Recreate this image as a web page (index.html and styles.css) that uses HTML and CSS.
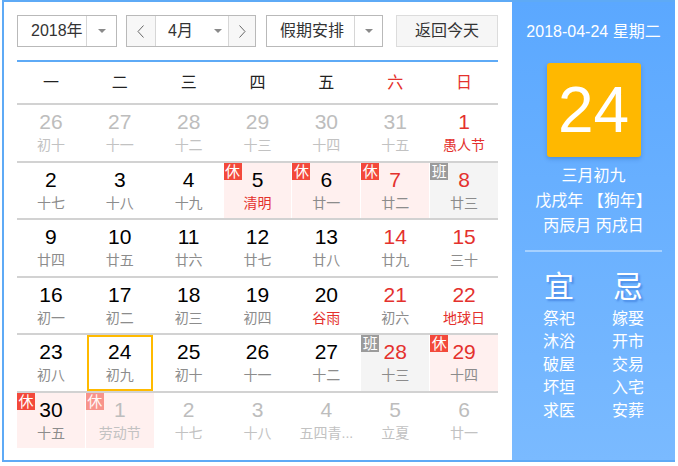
FILE: index.html
```html
<!DOCTYPE html>
<html lang="zh">
<head>
<meta charset="utf-8">
<title>万年历</title>
<link rel="stylesheet" href="styles.css">
</head>
<body>
<div class="widget">
  <div class="main">
    <div class="toolbar">
      <div class="sel year"><span class="sel-text">2018年</span><span class="sel-arrow"><i class="caret"></i></span></div>
      <div class="sel month-group">
        <span class="nav"><svg width="8" height="13" viewBox="0 0 8 13"><polyline points="6.5,0.5 1,6.5 6.5,12.5" fill="none" stroke="#666" stroke-width="1"/></svg></span>
        <span class="month"><span class="m-text">4月</span><i class="caret"></i></span>
        <span class="nav next"><svg width="8" height="13" viewBox="0 0 8 13"><polyline points="1.5,0.5 7,6.5 1.5,12.5" fill="none" stroke="#666" stroke-width="1"/></svg></span>
      </div>
      <div class="sel holiday"><span class="sel-text">假期安排</span><span class="sel-arrow"><i class="caret"></i></span></div>
      <div class="btn-today">返回今天</div>
    </div>

    <div class="weekdays">
      <span>一</span><span>二</span><span>三</span><span>四</span><span>五</span><span class="red">六</span><span class="red">日</span>
    </div>

    <div class="row">
      <div class="cell other"><span class="num">26</span><span class="lunar">初十</span></div>
      <div class="cell other"><span class="num">27</span><span class="lunar">十一</span></div>
      <div class="cell other"><span class="num">28</span><span class="lunar">十二</span></div>
      <div class="cell other"><span class="num">29</span><span class="lunar">十三</span></div>
      <div class="cell other"><span class="num">30</span><span class="lunar">十四</span></div>
      <div class="cell other"><span class="num">31</span><span class="lunar">十五</span></div>
      <div class="cell red"><span class="num">1</span><span class="lunar fest">愚人节</span></div>
    </div>

    <div class="row">
      <div class="cell"><span class="num">2</span><span class="lunar">十七</span></div>
      <div class="cell"><span class="num">3</span><span class="lunar">十八</span></div>
      <div class="cell"><span class="num">4</span><span class="lunar">十九</span></div>
      <div class="cell rest"><span class="badge">休</span><span class="num">5</span><span class="lunar fest">清明</span></div>
      <div class="cell rest"><span class="badge">休</span><span class="num">6</span><span class="lunar">廿一</span></div>
      <div class="cell rest red"><span class="badge">休</span><span class="num">7</span><span class="lunar">廿二</span></div>
      <div class="cell work red"><span class="badge work-b">班</span><span class="num">8</span><span class="lunar">廿三</span></div>
    </div>

    <div class="row">
      <div class="cell"><span class="num">9</span><span class="lunar">廿四</span></div>
      <div class="cell"><span class="num">10</span><span class="lunar">廿五</span></div>
      <div class="cell"><span class="num">11</span><span class="lunar">廿六</span></div>
      <div class="cell"><span class="num">12</span><span class="lunar">廿七</span></div>
      <div class="cell"><span class="num">13</span><span class="lunar">廿八</span></div>
      <div class="cell red"><span class="num">14</span><span class="lunar">廿九</span></div>
      <div class="cell red"><span class="num">15</span><span class="lunar">三十</span></div>
    </div>

    <div class="row">
      <div class="cell"><span class="num">16</span><span class="lunar">初一</span></div>
      <div class="cell"><span class="num">17</span><span class="lunar">初二</span></div>
      <div class="cell"><span class="num">18</span><span class="lunar">初三</span></div>
      <div class="cell"><span class="num">19</span><span class="lunar">初四</span></div>
      <div class="cell"><span class="num">20</span><span class="lunar fest">谷雨</span></div>
      <div class="cell red"><span class="num">21</span><span class="lunar">初六</span></div>
      <div class="cell red"><span class="num">22</span><span class="lunar fest">地球日</span></div>
    </div>

    <div class="row">
      <div class="cell"><span class="num">23</span><span class="lunar">初八</span></div>
      <div class="cell today"><span class="num">24</span><span class="lunar">初九</span></div>
      <div class="cell"><span class="num">25</span><span class="lunar">初十</span></div>
      <div class="cell"><span class="num">26</span><span class="lunar">十一</span></div>
      <div class="cell"><span class="num">27</span><span class="lunar">十二</span></div>
      <div class="cell work red"><span class="badge work-b">班</span><span class="num">28</span><span class="lunar">十三</span></div>
      <div class="cell rest red"><span class="badge">休</span><span class="num">29</span><span class="lunar">十四</span></div>
    </div>

    <div class="row">
      <div class="cell rest"><span class="badge">休</span><span class="num">30</span><span class="lunar">十五</span></div>
      <div class="cell rest other"><span class="badge">休</span><span class="num">1</span><span class="lunar">劳动节</span></div>
      <div class="cell other"><span class="num">2</span><span class="lunar">十七</span></div>
      <div class="cell other"><span class="num">3</span><span class="lunar">十八</span></div>
      <div class="cell other"><span class="num">4</span><span class="lunar">五四青...</span></div>
      <div class="cell other"><span class="num">5</span><span class="lunar">立夏</span></div>
      <div class="cell other"><span class="num">6</span><span class="lunar">廿一</span></div>
    </div>
  </div>

  <div class="panel">
    <div class="p-date">2018-04-24 星期二</div>
    <div class="bigday">24</div>
    <div class="p-lunar">
      <div>三月初九</div>
      <div>戊戌年 【狗年】</div>
      <div>丙辰月 丙戌日</div>
    </div>
    <div class="p-sep"></div>
    <div class="yiji">
      <div class="yj-col">
        <div class="yj-title">宜</div>
        <div class="yj-item">祭祀</div>
        <div class="yj-item">沐浴</div>
        <div class="yj-item">破屋</div>
        <div class="yj-item">坏垣</div>
        <div class="yj-item">求医</div>
      </div>
      <div class="yj-col">
        <div class="yj-title">忌</div>
        <div class="yj-item">嫁娶</div>
        <div class="yj-item">开市</div>
        <div class="yj-item">交易</div>
        <div class="yj-item">入宅</div>
        <div class="yj-item">安葬</div>
      </div>
    </div>
  </div>
</div>
</body>
</html>
```

FILE: styles.css
```css
html, body {
  margin: 0;
  padding: 0;
  background: #fff;
}

body {
  font-family: "Liberation Sans", "Noto Sans CJK SC", sans-serif;
  color: #000;
}

.widget {
  margin-left: 2px;
  width: 673px;
  height: 462px;
  box-sizing: border-box;
  border: 2px solid #5eaaf6;
  border-right: 0;
  display: flex;
  background: #fff;
}

.main {
  width: 508px;
  box-sizing: border-box;
  padding: 13px 14px 0 13px;
}

/* toolbar */
.toolbar {
  display: flex;
  height: 32px;
}

.sel {
  box-sizing: border-box;
  height: 32px;
  border: 1px solid #b9b9b9;
  background: #fff;
  display: flex;
  align-items: stretch;
  color: #333;
  font-size: 16px;
  line-height: 30px;
}

.sel-text {
  padding-left: 13px;
  box-sizing: border-box;
  border-right: 1px solid #d6d6d6;
}

.sel-arrow {
  flex: 1;
  display: flex;
  align-items: center;
  justify-content: center;
}

.caret {
  display: block;
  width: 0;
  height: 0;
  border-left: 4px solid transparent;
  border-right: 4px solid transparent;
  border-top: 4px solid #8a8a8a;
}

.year {
  width: 100px;
}

.year .sel-text {
  width: 69px;
}

.month-group {
  width: 130px;
  margin-left: 9px;
}

.nav {
  width: 28px;
  background: #f7f7f7;
  display: flex;
  align-items: center;
  justify-content: center;
  border-right: 1px solid #d6d6d6;
}

.nav.next {
  border-right: 0;
  border-left: 1px solid #d6d6d6;
  width: 26px;
}

.month {
  flex: 1;
  display: flex;
  align-items: center;
  padding-left: 12px;
}

.m-text {
  width: 46px;
}

.holiday {
  width: 117px;
  margin-left: 10px;
}

.holiday .sel-text {
  width: 88px;
}

.btn-today {
  width: 102px;
  margin-left: 13px;
  box-sizing: border-box;
  height: 32px;
  border: 1px solid #dcdcdc;
  background: #f6f6f6;
  color: #333;
  font-size: 16px;
  line-height: 30px;
  text-align: center;
}

/* calendar grid */
.weekdays {
  margin-top: 13px;
  border-top: 2px solid #5eaaf6;
  height: 43px;
  box-sizing: border-box;
  display: grid;
  grid-template-columns: repeat(7, 1fr);
  column-gap: 1px;
  line-height: 41px;
  text-align: center;
  font-size: 16px;
  color: #222;
}

.weekdays .red {
  color: #e4312d;
}

.row {
  height: 57.5px;
  box-sizing: border-box;
  border-top: 2px solid #d2d2d2;
  display: grid;
  grid-template-columns: repeat(7, 1fr);
  column-gap: 1px;
}

.cell {
  position: relative;
  text-align: center;
  padding-top: 5px;
  box-sizing: border-box;
}

.num {
  display: block;
  font-size: 21px;
  line-height: 24px;
  color: #000;
}

.lunar {
  display: block;
  margin-top: 1px;
  font-size: 14px;
  line-height: 20px;
  color: #8c8c8c;
  white-space: nowrap;
}

.cell.red .num {
  color: #e4312d;
}

.lunar.fest {
  color: #e4312d;
}

.cell.other .num {
  color: #bdbdbd;
}

.cell.other .lunar {
  color: #c2c2c2;
}

.cell.rest {
  background: #fff0ef;
}

.cell.work {
  background: #f4f4f4;
}

.cell.today {
  border: 2px solid #ffba00;
  margin: 0 1px;
  padding-top: 3px;
}

.badge {
  position: absolute;
  left: 0;
  top: 0;
  width: 18px;
  height: 17px;
  background: #f3493b;
  color: #fff;
  font-size: 15px;
  line-height: 17px;
  text-align: center;
}

.badge.work-b {
  background: #9b9b9b;
}

.cell.other .badge {
  opacity: 0.55;
}

/* right panel */
.panel {
  flex: 1;
  background: linear-gradient(#5ba8ff, #7abaff);
  color: #fff;
  display: flex;
  flex-direction: column;
  align-items: center;
  padding-top: 20px;
  box-sizing: border-box;
}

.p-date {
  font-size: 16px;
  line-height: 20px;
}

.bigday {
  margin-top: 21px;
  width: 94px;
  height: 94px;
  background: #ffb800;
  border-radius: 3px;
  box-shadow: 0 2px 4px rgba(0, 60, 140, 0.25);
  font-size: 64px;
  line-height: 94px;
  text-align: center;
  color: #fff;
}

.p-lunar {
  margin-top: 6px;
  font-size: 16px;
  line-height: 25px;
  text-align: center;
}

.p-sep {
  margin-top: 12px;
  width: 137px;
  height: 2px;
  background: rgba(255, 255, 255, 0.4);
}

.yiji {
  display: flex;
}

.yj-col {
  width: 69px;
  text-align: center;
}

.yj-title {
  margin-top: 17px;
  margin-bottom: 2px;
  font-size: 30px;
  line-height: 36px;
  text-shadow: 2px 2px 2px rgba(30, 90, 200, 0.45);
}

.yj-item {
  font-size: 16px;
  line-height: 23px;
}
```
